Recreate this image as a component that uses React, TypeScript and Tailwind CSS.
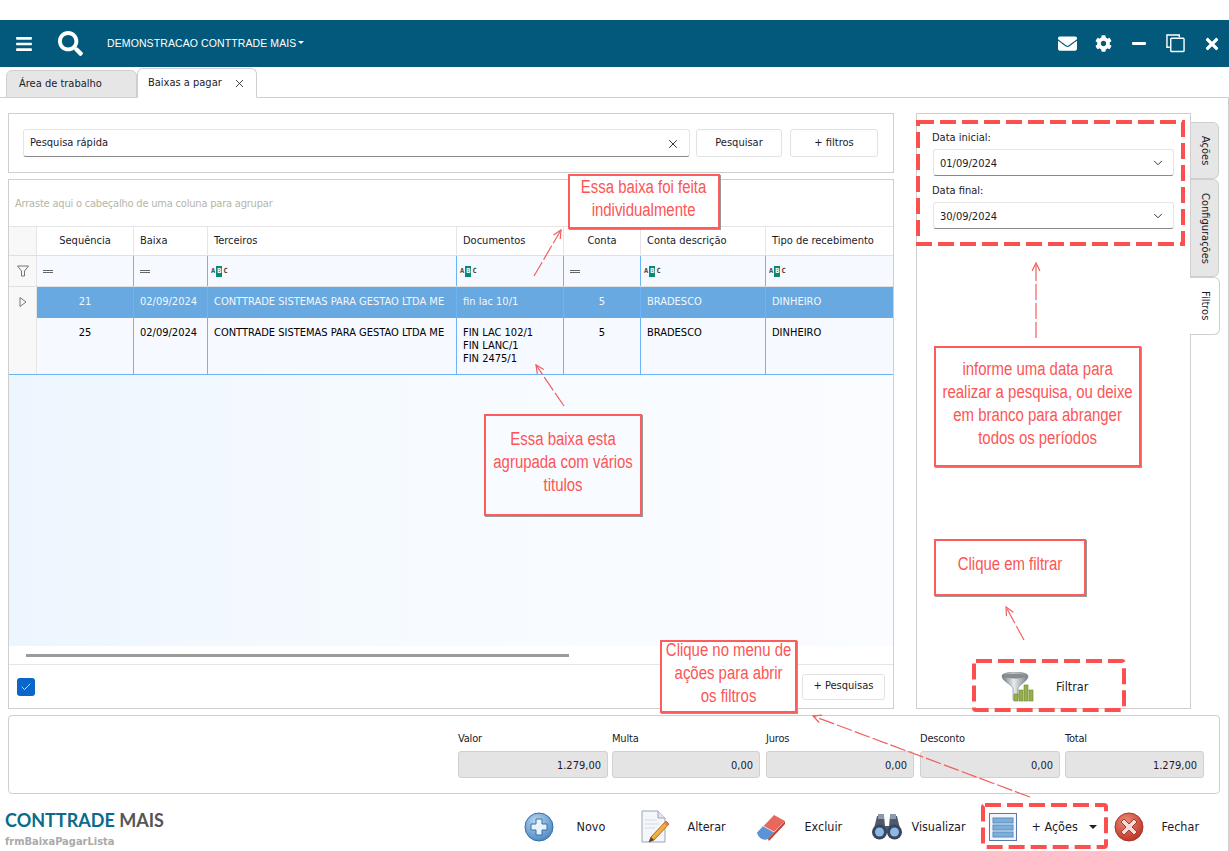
import { FaBars, FaSearch, FaEnvelope, FaCog, FaTimes } from 'react-icons/fa';
import { X, ChevronDown, Check } from 'lucide-react';

const columns = [
  { label: 'Sequência', filter: 'eq', center: true },
  { label: 'Baixa', filter: 'eq' },
  { label: 'Terceiros', filter: 'abc' },
  { label: 'Documentos', filter: 'abc' },
  { label: 'Conta', filter: 'eq', center: true },
  { label: 'Conta descrição', filter: 'abc' },
  { label: 'Tipo de recebimento', filter: 'abc' },
];

const rows = [
  { cells: ['21', '02/09/2024', 'CONTTRADE SISTEMAS PARA GESTAO LTDA ME', 'fin lac 10/1', '5', 'BRADESCO', 'DINHEIRO'], selected: true },
  { cells: ['25', '02/09/2024', 'CONTTRADE SISTEMAS PARA GESTAO LTDA ME', 'FIN LAC 102/1\nFIN LANC/1\nFIN 2475/1', '5', 'BRADESCO', 'DINHEIRO'], selected: false },
];

const totals = [
  { label: 'Valor', value: '1.279,00', w: 'w-[150px]' },
  { label: 'Multa', value: '0,00', w: 'w-[148px] ml-[4px]' },
  { label: 'Juros', value: '0,00', w: 'w-[148px] ml-[6px]' },
  { label: 'Desconto', value: '0,00', w: 'w-[140px] ml-[6px]' },
  { label: 'Total', value: '1.279,00', w: 'w-[139px] ml-[5px]' },
];

const gridCols = 'grid grid-cols-[28px_97px_74px_249px_107px_77px_125px_127px]';

function AbcIcon() {
  return (
    <span className="flex items-center font-['DejaVu_Sans_Mono',monospace] text-[7px] leading-none text-[#444] font-bold">
      <span>A</span>
      <span className="bg-[#0b8a6f] text-white px-[1px] mx-[1px] py-[2px]">B</span>
      <span>C</span>
    </span>
  );
}

function EqIcon() {
  return <span className="block w-[10px] h-[3px] border-y border-[#666]" />;
}

function NovoIcon() {
  return (
    <svg width="30" height="30" viewBox="0 0 30 30">
      <defs>
        <radialGradient id="novoBg" cx="0.4" cy="0.3" r="0.8">
          <stop offset="0" stopColor="#b9d8f2" />
          <stop offset="1" stopColor="#3f7fc0" />
        </radialGradient>
      </defs>
      <circle cx="15" cy="15" r="14" fill="url(#novoBg)" stroke="#3a6ea5" />
      <path d="M12 7h6v5h5v6h-5v5h-6v-5H7v-6h5z" fill="#e9f3fb" stroke="#3a6ea5" />
    </svg>
  );
}

function AlterarIcon() {
  return (
    <svg width="30" height="34" viewBox="0 0 30 34">
      <path d="M2 1h16l7 7v24H2z" fill="#f4f6fb" stroke="#9aa6b8" />
      <path d="M18 1v7h7" fill="#dfe5ef" stroke="#9aa6b8" />
      <path d="M5 10h12M5 14h14M5 18h10" stroke="#d5dbe6" />
      <path d="M26 11l3 3-15 16-5 2 2-5z" fill="#f0b040" stroke="#a8701c" />
      <path d="M26 11l3 3-2 2-3-3z" fill="#e27a5f" />
      <path d="M9 32l2-5 3 3z" fill="#5a4630" />
    </svg>
  );
}

function ExcluirIcon() {
  return (
    <svg width="32" height="30" viewBox="0 0 32 30">
      <path d="M2 21L19 3l11 6-17 18z" fill="#e8685c" />
      <path d="M2 21l6-7 11 6-6 7c-4 2-9 0-11-6z" fill="#5a93d8" />
      <path d="M8 14l11 6 11-11" fill="none" stroke="#f7d5cf" />
      <path d="M13 27l17-18v3L14 29z" fill="#b7433a" />
    </svg>
  );
}

function VisualizarIcon() {
  return (
    <svg width="32" height="28" viewBox="0 0 32 28">
      <path d="M6 3h7l1 10h4l1-10h7l4 17H2z" fill="#4d5a70" />
      <rect x="7" y="1" width="6" height="5" fill="#8d99ad" />
      <rect x="19" y="1" width="6" height="5" fill="#8d99ad" />
      <circle cx="8.5" cy="19" r="7.5" fill="#39465c" />
      <circle cx="23.5" cy="19" r="7.5" fill="#39465c" />
      <circle cx="8.5" cy="19" r="4.5" fill="#8db8e8" />
      <circle cx="23.5" cy="19" r="4.5" fill="#8db8e8" />
    </svg>
  );
}

function AcoesIcon() {
  return (
    <svg width="28" height="28" viewBox="0 0 28 28">
      <rect x="0.5" y="0.5" width="27" height="27" fill="#f1f5fb" stroke="#5d78a8" />
      <rect x="4" y="5" width="20" height="5" fill="#7cb0dc" stroke="#5a8cbc" />
      <rect x="4" y="12" width="20" height="5" fill="#7cb0dc" stroke="#5a8cbc" />
      <rect x="4" y="19" width="20" height="5" fill="#7cb0dc" stroke="#5a8cbc" />
    </svg>
  );
}

function FecharIcon() {
  return (
    <svg width="30" height="30" viewBox="0 0 30 30">
      <defs>
        <radialGradient id="fecharBg" cx="0.4" cy="0.3" r="0.8">
          <stop offset="0" stopColor="#ee8a78" />
          <stop offset="1" stopColor="#b62a1e" />
        </radialGradient>
      </defs>
      <circle cx="15" cy="15" r="14" fill="url(#fecharBg)" stroke="#a8382c" />
      <path d="M10 7l5 5 5-5 3 3-5 5 5 5-3 3-5-5-5 5-3-3 5-5-5-5z" fill="#f3ded9" stroke="#a8382c" />
    </svg>
  );
}

function FiltrarIcon() {
  return (
    <svg width="33" height="30" viewBox="0 0 33 30">
      <defs>
        <linearGradient id="funnelBg" x1="0" x2="1" y1="0" y2="0">
          <stop offset="0" stopColor="#6f777c" />
          <stop offset="0.45" stopColor="#e8ecee" />
          <stop offset="1" stopColor="#767e83" />
        </linearGradient>
      </defs>
      <path d="M1 4c0-5 26-5 26 0 0 5-8 8-10 12v10l-5 2V16C10 12 1 9 1 4z" fill="url(#funnelBg)" stroke="#73797d" strokeWidth="0.6" />
      <ellipse cx="14" cy="4" rx="11" ry="2.5" fill="#868d91" />
      <rect x="13" y="22" width="4" height="7" fill="#98b04c" stroke="#6c8430" strokeWidth="0.6" />
      <rect x="18" y="18" width="4" height="11" fill="#98b04c" stroke="#6c8430" strokeWidth="0.6" />
      <rect x="23" y="13" width="4" height="16" fill="#98b04c" stroke="#6c8430" strokeWidth="0.6" />
      <rect x="28" y="18" width="4" height="11" fill="#98b04c" stroke="#6c8430" strokeWidth="0.6" />
    </svg>
  );
}

function Annotation({ className, children }: { className: string; children: React.ReactNode }) {
  return (
    <div className={`absolute flex items-center justify-center text-center pb-[6px] border-2 border-[#fc5c5c] text-[#fc5555] font-['Liberation_Sans',sans-serif] text-[18px] leading-[23px] shadow-[1px_1px_0_#999] ${className}`}>
      <div className="whitespace-nowrap scale-x-[0.83]">{children}</div>
    </div>
  );
}

function Arrow({ x1, y1, x2, y2 }: { x1: number; y1: number; x2: number; y2: number }) {
  const a = Math.atan2(y2 - y1, x2 - x1);
  const len = 9;
  const p = (d: number) => `${x2 - len * Math.cos(a + d)},${y2 - len * Math.sin(a + d)}`;
  return (
    <g fill="none" stroke="#f25e5e" strokeWidth="1.2">
      <line x1={x1} y1={y1} x2={x2} y2={y2} strokeDasharray="16 3" />
      <polyline points={`${p(0.45)} ${x2},${y2} ${p(-0.45)}`} />
    </g>
  );
}

function Overlay() {
  const dashed = { fill: 'none', stroke: '#fc5050', strokeWidth: 4, strokeDasharray: '16 6' };
  return (
    <svg className="absolute inset-0 pointer-events-none" width="1229" height="851">
      <Arrow x1={534} y1={276} x2={561} y2={230} />
      <Arrow x1={564} y1={406} x2={536} y2={365} />
      <Arrow x1={1036} y1={338} x2={1036} y2={263} />
      <Arrow x1={1024} y1={640} x2={1006} y2={607} />
      <Arrow x1={1030} y1={797} x2={813} y2={716} />
      <rect x="918" y="122" width="265" height="122" {...dashed} />
      <rect x="974" y="661" width="150" height="49" rx="2" {...dashed} />
      <rect x="983" y="805" width="123" height="42" rx="2" {...dashed} />
    </svg>
  );
}

function DateField({ label, value }: { label: string; value: string }) {
  return (
    <div className="flex flex-col">
      <span className="h-[19px] ml-[-1px] leading-[16px]">{label}</span>
      <div className="h-[27px] w-[241px] flex items-center justify-between px-[6px] bg-white rounded-[3px] border border-[#e5e5e5] border-b-[#8a8a8a]">
        <span className="pt-[3px]">{value}</span>
        <ChevronDown size={14} strokeWidth={1.5} className="mr-[2px]" />
      </div>
    </div>
  );
}

function SideTab({ label, className }: { label: string; className: string }) {
  return (
    <div className={`flex items-center justify-center border border-[#cfcfcf] border-l-0 rounded-r-[6px] [writing-mode:vertical-rl] ${className}`}>
      {label}
    </div>
  );
}

function FooterButton({ icon, label, className, caret }: { icon: React.ReactNode; label: string; className: string; caret?: boolean }) {
  return (
    <div className={`flex items-center ${className}`}>
      {icon}
      <span>{label}</span>
      {caret && <span className="ml-[-3px] border-x-[4px] border-x-transparent border-t-[4px] border-t-[#222]" />}
    </div>
  );
}

export default function App() {
  return (
    <div className="relative w-[1229px] h-[851px] overflow-hidden bg-white flex flex-col font-['DejaVu_Sans_Condensed','DejaVu_Sans',sans-serif] text-[11px] text-[#1a1a2a]">
      <div className="h-5 shrink-0" />

      <div className="h-[47px] shrink-0 bg-[#02597c] text-white flex items-center">
        <FaBars size={18} className="ml-[15px]" />
        <FaSearch size={25} className="ml-[25px]" />
        <span className="ml-[24px] font-['Liberation_Sans',sans-serif] text-[10.5px] tracking-[0.1px]">DEMONSTRACAO CONTTRADE MAIS</span>
        <span className="ml-[2px] mb-[3px] border-x-[3px] border-x-transparent border-t-[3px] border-t-white" />
        <div className="ml-auto flex items-center">
          <FaEnvelope size={19} />
          <FaCog size={17} className="ml-[18px]" />
          <span className="ml-[20px] block w-[14px] h-[3px] rounded-[1px] bg-white" />
          <svg width="19" height="19" viewBox="0 0 20 20" fill="none" stroke="white" strokeWidth="1.5" className="ml-[20px]">
            <path d="M14 3.5V1H1v13h3" />
            <rect x="5" y="4.5" width="14" height="14" rx="1" />
          </svg>
          <FaTimes size={18} className="ml-[18px] mr-[8px]" />
        </div>
      </div>

      <div className="h-[31px] shrink-0 flex items-end pl-[6px] border-b border-[#cfcfcf]">
        <div className="w-[131px] h-[28px] mb-[-1px] flex items-center pl-[12px] pt-[1px] bg-[#e6e6e6] border border-[#cfcfcf] rounded-t-[6px]">Área de trabalho</div>
        <div className="w-[120px] h-[30px] mb-[-1px] flex items-center justify-between pl-[10px] pr-[10px] pt-[1px] bg-white border border-[#cfcfcf] border-b-white rounded-t-[6px]">
          <span>Baixas a pagar</span>
          <X size={13} strokeWidth={1.5} />
        </div>
      </div>

      <div className="flex-1 flex flex-col border-r border-[#cfcfcf]">
        <div className="flex pl-2 pt-[15px]">
          <div className="w-[886px] flex flex-col gap-[6px]">
            <div className="h-[60px] flex items-center pl-[14px] border border-[#cfcfcf]">
              <div className="w-[667px] h-[28px] flex items-center justify-between pl-[6px] pr-[9px] pt-[1px] bg-white rounded-[3px] border border-[#e5e5e5] border-b-[#8a8a8a]">
                <span>Pesquisa rápida</span>
                <X size={14} strokeWidth={1.5} />
              </div>
              <div className="ml-[6px] w-[86px] h-[28px] flex items-center justify-center pt-[1px] border border-[#e2e2e2] rounded-[3px]">Pesquisar</div>
              <div className="ml-[8px] w-[88px] h-[28px] flex items-center justify-center pt-[1px] border border-[#e2e2e2] rounded-[3px]">+ filtros</div>
            </div>

            <div className="h-[530px] flex flex-col border border-[#cfcfcf]">
              <div className="h-[47px] shrink-0 flex items-center pl-[6px] pt-[3px] tracking-[-0.2px] text-[#b5b5a8] border-b border-[#e5e5e5]">Arraste aqui o cabeçalho de uma coluna para agrupar</div>

              <div className={`${gridCols} h-[29px] shrink-0 border-b border-[#e0e0e0]`}>
                <div className="bg-[#f8f8f8] border-r border-[#e5e5e5]" />
                {columns.map((c) => (
                  <div key={c.label} className={`flex items-center px-[6px] pt-[1px] border-r border-[#e5e5e5] last:border-r-0 ${c.center ? 'justify-center' : ''}`}>{c.label}</div>
                ))}
              </div>

              <div className={`${gridCols} h-[31px] shrink-0 border-b border-[#e0e0e0]`}>
                <div className="flex items-center justify-center bg-[#f8f8f8] border-r border-[#e5e5e5]">
                  <svg width="12" height="12" viewBox="0 0 12 12" fill="none" stroke="#777">
                    <path d="M0.5 1h11L7.5 6v5h-3V6z" />
                  </svg>
                </div>
                {columns.map((c) => (
                  <div key={c.label} className={`flex items-center bg-[#f6f9ff] border-r border-[#6cb4f8] last:border-r-0 ${c.filter === 'eq' ? 'px-[6px]' : 'px-[3px]'}`}>
                    {c.filter === 'eq' ? <EqIcon /> : <AbcIcon />}
                  </div>
                ))}
              </div>

              {rows.map((r) => (
                <div key={r.cells[0]} className={`${gridCols} shrink-0 ${r.selected ? 'h-[31px]' : 'h-[57px] border-b border-[#6cb4f8]'}`}>
                  <div className="flex justify-center pt-[10px] bg-[#f8f8f8] border-r border-[#e5e5e5]">
                    {r.selected && (
                      <svg width="8" height="10" viewBox="0 0 8 10" fill="none" stroke="#777">
                        <path d="M1 0.5L7 5 1 9.5z" />
                      </svg>
                    )}
                  </div>
                  {r.cells.map((cell, i) => (
                    <div
                      key={i}
                      className={`pt-[8px] px-[6px] leading-[13px] whitespace-pre-line border-r border-[#6cb4f8] last:border-r-0 ${columns[i].center ? 'text-center' : ''} ${r.selected ? 'bg-[#68a9e1] text-[#f2f7fc]' : 'bg-[#f6f9ff] text-black'}`}
                    >
                      {cell}
                    </div>
                  ))}
                </div>
              ))}

              <div className="flex-1 bg-gradient-to-r from-[#edf6fe] via-[#f7fbff] to-[#fafcff]" />

              <div className="h-[19px] shrink-0 flex items-center pl-[17px] border-b border-[#e5e5e5]">
                <div className="w-[543px] h-[3px] bg-[#9b9b9b]" />
              </div>

              <div className="h-[43px] shrink-0 flex items-center justify-between pl-[8px] pr-[8px]">
                <div className="w-[18px] h-[18px] flex items-center justify-center rounded-[3px] bg-[#0a66c8]">
                  <Check size={12} strokeWidth={1.5} className="text-white" />
                </div>
                <div className="w-[83px] h-[26px] flex items-center justify-center border border-[#e2e2e2] rounded-[3px]">+ Pesquisas</div>
              </div>
            </div>
          </div>

          <div className="ml-[22px] w-[275px] h-[596px] flex flex-col border border-[#cfcfcf]">
            <div className="flex flex-col gap-[7px] pl-[16px] pt-[16px]">
              <DateField label="Data inicial:" value="01/09/2024" />
              <DateField label="Data final:" value="30/09/2024" />
            </div>
            <div className="mt-auto mb-[6px] flex items-center pl-[84px]">
              <FiltrarIcon />
              <span className="ml-[22px] text-[12.5px]">Filtrar</span>
            </div>
          </div>

          <div className="flex flex-col pt-[9px] w-[29px]">
            <SideTab label="Ações" className="h-[57px] w-[28px] bg-[#e6e6e6]" />
            <SideTab label="Configurações" className="h-[98px] w-[28px] bg-[#e6e6e6]" />
            <SideTab label="Filtros" className="h-[58px] w-[30px] ml-[-1px] bg-white" />
          </div>
        </div>

        <div className="mt-[6px] ml-2 w-[1212px] h-[79px] shrink-0 flex items-start justify-end pr-[15px] pt-[15px] border border-[#cfcfcf] rounded-[4px]">
          {totals.map((t) => (
            <div key={t.label} className={`flex flex-col ${t.w}`}>
              <span className="h-[20px] pt-[1px] leading-[14px] tracking-[-0.2px]">{t.label}</span>
              <div className="h-[27px] flex items-center justify-end pr-[6px] pt-[3px] bg-[#e4e4e4] border border-[#d0d0d0] rounded-[3px]">{t.value}</div>
            </div>
          ))}
        </div>

        <div className="flex-1 flex items-center pl-[5px] pt-[7px]">
          <div className="flex flex-col mt-[8px]">
            <span className="font-['Lato',sans-serif] font-bold text-[18px] leading-[22px] text-[#0a6b8a]">CONTTRADE <span className="text-[#555]">MAIS</span></span>
            <span className="font-bold leading-[22px] text-[#aaaaaa]">frmBaixaPagarLista</span>
          </div>
          <div className="ml-auto flex items-center pr-[29px] text-[12.5px]">
            <FooterButton icon={<NovoIcon />} label="Novo" className="w-[116px] gap-[22px]" />
            <FooterButton icon={<AlterarIcon />} label="Alterar" className="w-[115px] gap-[17px]" />
            <FooterButton icon={<ExcluirIcon />} label="Excluir" className="w-[116px] gap-[17px]" />
            <FooterButton icon={<VisualizarIcon />} label="Visualizar" className="w-[118px] gap-[8px]" />
            <FooterButton icon={<AcoesIcon />} label="+ Ações" caret className="w-[125px] gap-[14px]" />
            <FooterButton icon={<FecharIcon />} label="Fechar" className="gap-[17px]" />
          </div>
        </div>
      </div>

      <Annotation className="left-[568px] top-[174px] w-[152px] h-[55px] bg-white">Essa baixa foi feita<br />individualmente</Annotation>
      <Annotation className="left-[484px] top-[414px] w-[158px] h-[102px] bg-[#f8fbff]">Essa baixa esta<br />agrupada com vários<br />titulos</Annotation>
      <Annotation className="left-[934px] top-[346px] w-[207px] h-[121px] bg-white">informe uma data para<br />realizar a pesquisa, ou deixe<br />em branco para abranger<br />todos os períodos</Annotation>
      <Annotation className="left-[934px] top-[539px] w-[152px] h-[57px] bg-white">Clique em filtrar</Annotation>
      <Annotation className="left-[660px] top-[640px] w-[137px] h-[73px] bg-white">Clique no menu de<br />ações para abrir<br />os filtros</Annotation>
      <Overlay />
    </div>
  );
}
